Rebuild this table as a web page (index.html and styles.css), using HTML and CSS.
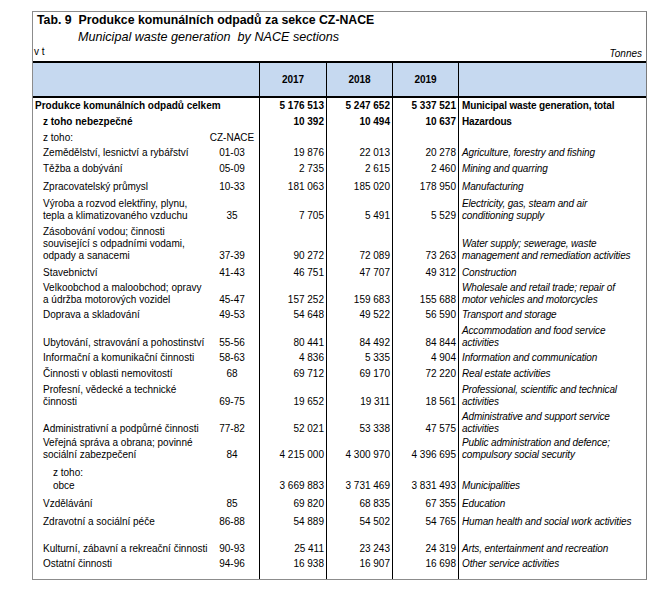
FILE: index.html
```html
<!DOCTYPE html>
<html lang="cs">
<head>
<meta charset="utf-8">
<title>Tab. 9</title>
<link rel="stylesheet" href="styles.css">
</head>
<body>
<div class="frame">
  <div class="title">Tab. 9&nbsp; Produkce komunálních odpadů za sekce CZ-NACE</div>
  <div class="subtitle">Municipal waste generation &nbsp;by NACE sections</div>
  <div class="units"><span class="unit-cz">v t</span><span class="unit-en">Tonnes</span></div>
  <table class="data">
    <colgroup>
      <col class="c-label"><col class="c-nace"><col class="c-num1"><col class="c-num"><col class="c-num"><col class="c-en">
    </colgroup>
    <thead>
      <tr class="head"><th></th><th></th><th class="yr">2017</th><th class="yr">2018</th><th class="yr">2019</th><th class="en"></th></tr>
    </thead>
    <tbody>
      <tr class="h15 b"><td class="lb">Produkce komunálních odpadů celkem</td><td class="nc"></td><td class="n">5 176 513</td><td class="n">5 247 652</td><td class="n">5 337 521</td><td class="en">Municipal waste generation, total</td></tr>
      <tr class="h16 b"><td class="lb i1">z toho nebezpečné</td><td class="nc"></td><td class="n">10 392</td><td class="n">10 494</td><td class="n">10 637</td><td class="en">Hazardous</td></tr>
      <tr class="h16"><td class="lb i1">z toho:</td><td class="nc">CZ-NACE</td><td class="n"></td><td class="n"></td><td class="n"></td><td class="en"></td></tr>
      <tr class="h15"><td class="lb i1">Zemědělství, lesnictví a rybářství</td><td class="nc">01-03</td><td class="n">19 876</td><td class="n">22 013</td><td class="n">20 278</td><td class="en it">Agriculture, forestry and fishing</td></tr>
      <tr class="h16"><td class="lb i1">Těžba a dobývání</td><td class="nc">05-09</td><td class="n">2 735</td><td class="n">2 615</td><td class="n">2 460</td><td class="en it">Mining and quarring</td></tr>
      <tr class="h18"><td class="lb i1">Zpracovatelský průmysl</td><td class="nc">10-33</td><td class="n">181 063</td><td class="n">185 020</td><td class="n">178 950</td><td class="en it">Manufacturing</td></tr>
      <tr class="h29"><td class="lb i1">Výroba a rozvod elektřiny, plynu,<br>tepla a klimatizovaného vzduchu</td><td class="nc">35</td><td class="n">7 705</td><td class="n">5 491</td><td class="n">5 529</td><td class="en it">Electricity, gas, steam and air<br>conditioning supply</td></tr>
      <tr class="h40"><td class="lb i1">Zásobování vodou; činnosti<br>související s odpadními vodami,<br>odpady a sanacemi</td><td class="nc">37-39</td><td class="n">90 272</td><td class="n">72 089</td><td class="n">73 263</td><td class="en it">Water supply; sewerage, waste<br>management and remediation activities</td></tr>
      <tr class="h17"><td class="lb i1">Stavebnictví</td><td class="nc">41-43</td><td class="n">46 751</td><td class="n">47 707</td><td class="n">49 312</td><td class="en it">Construction</td></tr>
      <tr class="h27"><td class="lb i1">Velkoobchod a maloobchod; opravy<br>a údržba motorových vozidel</td><td class="nc">45-47</td><td class="n">157 252</td><td class="n">159 683</td><td class="n">155 688</td><td class="en it">Wholesale and retail trade; repair of<br>motor vehicles and motorcycles</td></tr>
      <tr class="h15"><td class="lb i1">Doprava a skladování</td><td class="nc">49-53</td><td class="n">54 648</td><td class="n">49 522</td><td class="n">56 590</td><td class="en it">Transport and storage</td></tr>
      <tr class="h28"><td class="lb i1">Ubytování, stravování a pohostinství</td><td class="nc">55-56</td><td class="n">80 441</td><td class="n">84 492</td><td class="n">84 844</td><td class="en it">Accommodation and food service<br>activities</td></tr>
      <tr class="h15"><td class="lb i1">Informační a komunikační činnosti</td><td class="nc">58-63</td><td class="n">4 836</td><td class="n">5 335</td><td class="n">4 904</td><td class="en it">Information and communication</td></tr>
      <tr class="h16"><td class="lb i1">Činnosti v oblasti nemovitostí</td><td class="nc">68</td><td class="n">69 712</td><td class="n">69 170</td><td class="n">72 220</td><td class="en it">Real estate activities</td></tr>
      <tr class="h28"><td class="lb i1">Profesní, vědecké a technické<br>činnosti</td><td class="nc">69-75</td><td class="n">19 652</td><td class="n">19 311</td><td class="n">18 561</td><td class="en it">Professional, scientific and technical<br>activities</td></tr>
      <tr class="h27"><td class="lb i1">Administrativní a podpůrné činnosti</td><td class="nc">77-82</td><td class="n">52 021</td><td class="n">53 338</td><td class="n">47 575</td><td class="en it">Administrative and support service<br>activities</td></tr>
      <tr class="h26"><td class="lb i1">Veřejná správa a obrana; povinné<br>sociální zabezpečení</td><td class="nc">84</td><td class="n">4 215 000</td><td class="n">4 300 970</td><td class="n">4 396 695</td><td class="en it">Public administration and defence;<br>compulsory social security</td></tr>
      <tr class="h18"><td class="lb i2">z toho:</td><td class="nc"></td><td class="n"></td><td class="n"></td><td class="n"></td><td class="en"></td></tr>
      <tr class="h13"><td class="lb i2">obce</td><td class="nc"></td><td class="n">3 669 883</td><td class="n">3 731 469</td><td class="n">3 831 493</td><td class="en it">Municipalities</td></tr>
      <tr class="h18"><td class="lb i1">Vzdělávání</td><td class="nc">85</td><td class="n">69 820</td><td class="n">68 835</td><td class="n">67 355</td><td class="en it">Education</td></tr>
      <tr class="h18"><td class="lb i1">Zdravotní a sociální péče</td><td class="nc">86-88</td><td class="n">54 889</td><td class="n">54 502</td><td class="n">54 765</td><td class="en it">Human health and social work activities</td></tr>
      <tr class="h27"><td class="lb i1">Kulturní, zábavní a rekreační činnosti</td><td class="nc">90-93</td><td class="n">25 411</td><td class="n">23 243</td><td class="n">24 319</td><td class="en it">Arts, entertainment and recreation</td></tr>
      <tr class="h15 last"><td class="lb i1">Ostatní činnosti</td><td class="nc">94-96</td><td class="n">16 938</td><td class="n">16 907</td><td class="n">16 698</td><td class="en it">Other service activities</td></tr>
    </tbody>
  </table>
</div>
</body>
</html>
```

FILE: styles.css
```css
* { box-sizing: border-box; }
html, body { margin: 0; padding: 0; background: #ffffff; }
body {
  font-family: "Liberation Sans", Arial, sans-serif;
  color: #000000;
}
.frame {
  margin: 11px 0 0 32px;
  width: 615px;
  border: 1px solid #8c8c8c;
  border-right-color: #7a7a7a;
}
.title {
  height: 17px;
  line-height: 17px;
  padding-left: 4px;
  font-size: 12.3px;
  font-weight: bold;
  white-space: nowrap;
}
.subtitle {
  height: 16px;
  line-height: 16px;
  padding-left: 45px;
  font-size: 12.6px;
  font-style: italic;
  white-space: nowrap;
}
.units {
  display: flex;
  justify-content: space-between;
  height: 16px;
  font-size: 10px;
}
.unit-cz { line-height: 14px; padding-left: 1px; padding-top: 0; }
.unit-en { line-height: 14px; padding-top: 2px; padding-right: 4px; font-style: italic; }
.data {
  width: 613px;
  table-layout: fixed;
  border-collapse: separate;
  border-spacing: 0;
  font-size: 10px;
}
.c-label { width: 172px; }
.c-nace { width: 54px; }
.c-num1 { width: 67px; }
.c-num { width: 66px; }
.c-en { width: 188px; }
.data th, .data td {
  padding: 0 0 1px 0;
  line-height: 12px;
  vertical-align: bottom;
  white-space: nowrap;
  overflow: visible;
}
.head th {
  height: 37px;
  background: #c6d9f0;
  border-top: 2px solid #000;
  border-bottom: 2px solid #000;
  vertical-align: middle;
  font-weight: bold;
  text-align: center;
  padding: 0;
}
.head th.yr, .head th.en { border-left: 1px solid #000; }
.data td.n, .data td.en { border-left: 1px solid #000; }
.n { text-align: right; padding-right: 2px !important; }
.nc { text-align: center; }
.lb { padding-left: 2px !important; }
.lb.i1 { padding-left: 10px !important; }
.lb.i2 { padding-left: 20px !important; }
.en { padding-left: 3px !important; text-align: left; letter-spacing: -0.15px; }
.it { font-style: italic; }
.b td { font-weight: bold; }
.h13 td { height: 13px; }
.h15 td { height: 15px; }
.h16 td { height: 16px; }
.h17 td { height: 17px; }
.h18 td { height: 18px; }
.h26 td { height: 26px; }
.h27 td { height: 27px; }
.h28 td { height: 28px; }
.h29 td { height: 29px; }
.h40 td { height: 40px; }
.last td { height: 23px; padding-bottom: 9px; }
```
